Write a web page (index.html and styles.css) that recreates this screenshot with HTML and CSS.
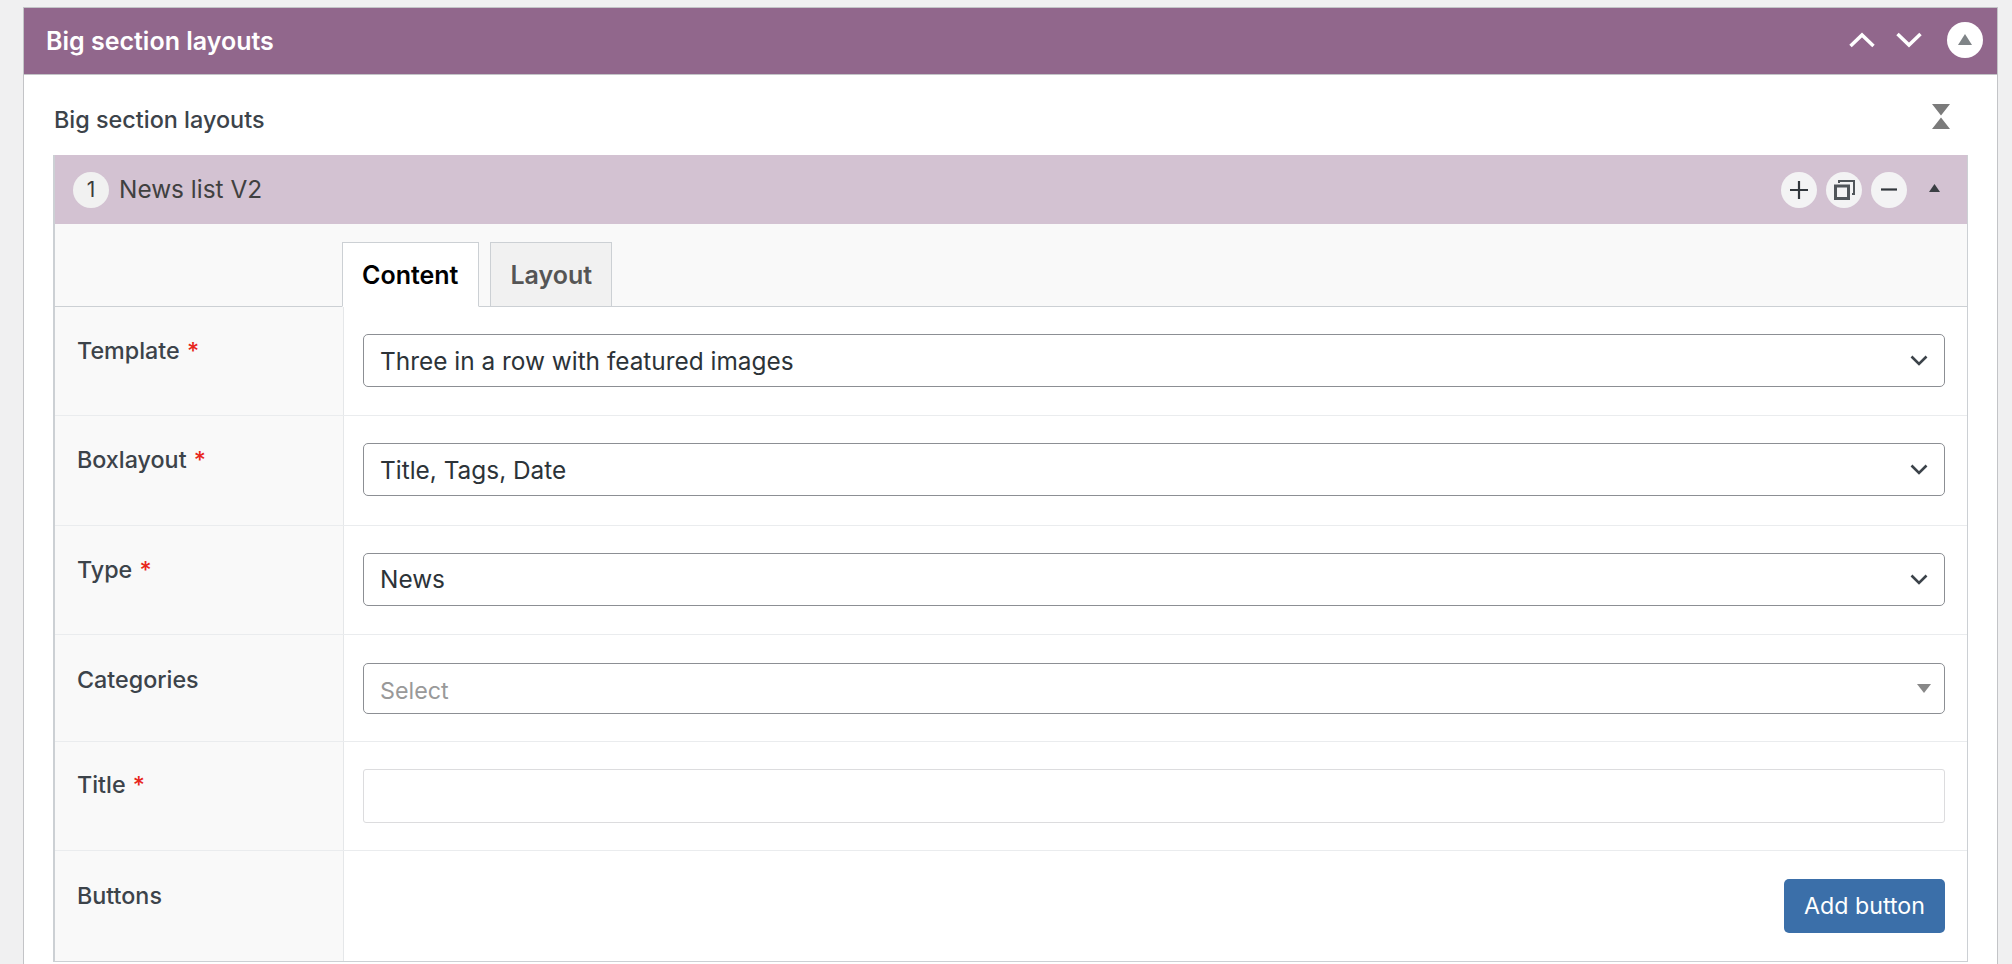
FILE: index.html
```html
<!DOCTYPE html>
<html lang="en">
<head>
<meta charset="utf-8">
<title>Big section layouts</title>
<link rel="stylesheet" href="styles.css">
</head>
<body>
<section class="postbox">
  <header class="postbox-head">
    <h2 class="postbox-title">Big section layouts</h2>
    <div class="postbox-actions">
      <svg class="chev" width="26" height="16" viewBox="0 0 26 16"><path d="M1.5 14 13 3l11.5 11" /></svg>
      <svg class="chev" width="26" height="16" viewBox="0 0 26 16"><path d="M1.5 2 13 13 24.500 2" /></svg>
      <span class="toggle-circle"><svg width="14" height="11" viewBox="0 0 14 11"><path d="M7 0 14 11H0z" fill="#7f8487"/></svg></span>
    </div>
  </header>
  <div class="postbox-body">
    <div class="group-title-row">
      <span class="group-title">Big section layouts</span>
      <svg class="hourglass" width="18" height="25" viewBox="0 0 18 25"><path d="M0 0h18L9 11.500zM9 13.500 18 25H0z" fill="#7b7b7b"/></svg>
    </div>
    <div class="layout">
      <div class="layout-head">
        <span class="order">1</span>
        <span class="layout-name">News list V2</span>
        <div class="layout-actions">
          <span class="round"><svg width="18" height="18" viewBox="0 0 18 18"><path d="M9 0v18M0 9h18" stroke="#32373c" stroke-width="2.200" fill="none"/></svg></span>
          <span class="round"><svg width="21" height="20" viewBox="0 0 21 20"><path d="M5 3V1h15v13h-2" stroke="#50555a" stroke-width="2" fill="none"/><rect x="1.500" y="6" width="13" height="12.500" stroke="#50555a" stroke-width="3" fill="none"/></svg></span>
          <span class="round"><svg width="16" height="3" viewBox="0 0 16 3"><path d="M0 1.500h16" stroke="#32373c" stroke-width="2.200"/></svg></span>
          <svg class="caret" width="11" height="8" viewBox="0 0 11 8"><path d="M5.500 0 11 8H0z" fill="#3a3f44"/></svg>
        </div>
      </div>
      <div class="tabs-row">
        <div class="tab tab-active">Content</div>
        <div class="tab">Layout</div>
      </div>
      <div class="row row-a">
        <div class="label">Template <span class="req">*</span></div>
        <div class="field"><div class="select"><span>Three in a row with featured images</span><svg width="18" height="11" viewBox="0 0 18 11"><path d="M1.500 1.500 9 9l7.500-7.500"/></svg></div></div>
      </div>
      <div class="row row-a">
        <div class="label">Boxlayout <span class="req">*</span></div>
        <div class="field"><div class="select"><span>Title, Tags, Date</span><svg width="18" height="11" viewBox="0 0 18 11"><path d="M1.500 1.500 9 9l7.500-7.500"/></svg></div></div>
      </div>
      <div class="row row-a">
        <div class="label">Type <span class="req">*</span></div>
        <div class="field"><div class="select"><span>News</span><svg width="18" height="11" viewBox="0 0 18 11"><path d="M1.500 1.500 9 9l7.500-7.500"/></svg></div></div>
      </div>
      <div class="row row-b">
        <div class="label">Categories</div>
        <div class="field"><div class="select select-multi"><span>Select</span><svg class="tri" width="14" height="9" viewBox="0 0 14 9"><path d="M0 0h14L7 9z" fill="#888"/></svg></div></div>
      </div>
      <div class="row row-c">
        <div class="label">Title <span class="req">*</span></div>
        <div class="field"><div class="text-input"></div></div>
      </div>
      <div class="row row-last">
        <div class="label">Buttons</div>
        <div class="field field-end"><div class="button">Add button</div></div>
      </div>
    </div>
  </div>
</section>
</body>
</html>
```
FILE: styles.css
```css
* { box-sizing: border-box; }
html, body { margin: 0; height: 964px; overflow: hidden; }
body {
  background: #f0f0f1;
  padding: 7px 14px 0 23px;
  font-family: Inter, "Liberation Sans", sans-serif;
  color: #3c434a;
}
.postbox {
  background: #fff;
  border: 1px solid #c3c4c7;
  border-bottom: 0;
  height: 957px;
}
.postbox-head {
  height: 67px;
  background: #91678c;
  border-bottom: 1px solid #c3c4c7;
  display: flex;
  align-items: center;
  justify-content: space-between;
  padding: 0 14px 2px 22px;
}
.postbox-title {
  margin: 2px 0 0;
  font-size: 25px;
  font-weight: 600;
  color: #fff;
}
.postbox-actions { display: flex; align-items: center; }
.chev { fill: none; stroke: #fff; stroke-width: 3.500; margin-right: 21px; }
.chev:nth-child(2) { margin-right: 25px; }
.toggle-circle {
  width: 36px; height: 36px; border-radius: 50%; background: #fff;
  display: flex; align-items: center; justify-content: center;
}
.toggle-circle svg { margin-top: -2px; }
.postbox-body { padding: 0 29px 0 29px; }
.group-title-row {
  height: 80px;
  display: flex;
  align-items: center;
  justify-content: space-between;
  padding: 0 18px 0 1px;
}
.group-title { font-size: 23.400px; font-weight: 500; color: #3c434a; margin-top: 9px; }
.hourglass { margin-top: 2px; }
.layout {
  border: 1px solid #ccd0d4;
  border-top: 0;
  border-left-width: 2px;
  background: #fff;
}
.layout-head {
  height: 69px;
  background: #d3c2d2;
  display: flex;
  align-items: center;
  padding: 0 27px 0 18px;
}
.order {
  width: 36px; height: 36px; border-radius: 50%;
  background: #f1f1f1; color: #3c3c3c;
  font-size: 21px;
  display: flex; align-items: center; justify-content: center;
}
.layout-name { font-size: 24.400px; margin: -1px 0 0 10px; color: #404040; }
.layout-actions { margin-left: auto; display: flex; align-items: center; gap: 9px; }
.round {
  width: 36px; height: 36px; border-radius: 50%; background: #f3f3f4;
  display: flex; align-items: center; justify-content: center;
}
.caret { margin-left: 13px; margin-top: -3px; }
.tabs-row {
  height: 83px;
  background: #f9f9f9;
  border-bottom: 1px solid #ccd0d4;
  display: flex;
  align-items: flex-end;
  gap: 11px;
  padding-left: 287px;
}
.tab {
  height: 65px;
  margin-bottom: -1px;
  padding: 0 19px;
  border: 1px solid #ccd0d4;
  background: #f1f1f1;
  font-size: 25px;
  font-weight: 600;
  color: #555;
  display: flex;
  align-items: center;
  border-bottom-color: #ccd0d4;
}
.tab-active {
  background: #fff;
  color: #000;
  border-bottom-color: #fff;
  padding: 0 20px 0 19px;
}
.row {
  display: grid;
  grid-template-columns: 289px 1fr;
  border-bottom: 1px solid #eaecee;
}
.row-a { height: 109.330px; }
.row-b { height: 107px; }
.row-c { height: 109px; }
.row-last { height: 110px; border-bottom: 0; }
.label {
  background: #f9f9f9;
  border-right: 1px solid #e5e7e9;
  padding: 31px 0 0 22px;
  font-size: 23.300px;
  font-weight: 500;
  line-height: 26px;
  color: #3c434a;
}
.row-b .label, .row-last .label { padding-top: 32px; }
.row-c .label { padding-top: 30px; }
.req { color: #e8261c; margin-left: 1px; }
.field { padding: 27px 22px 0 19px; }
.select {
  height: 53px;
  border: 1px solid #8c8f94;
  border-radius: 5px;
  background: #fff;
  display: flex;
  align-items: center;
  justify-content: space-between;
  padding: 0 16px 0 16px;
  font-size: 24.400px;
  color: #2c3338;
}
.select svg { fill: none; stroke: #3c434a; stroke-width: 2.600; }
.select-multi { height: 51px; margin-top: 1px; color: #999; padding-right: 13px; font-size: 23.300px; }
.select-multi span { margin-top: 4px; }
.select .tri { stroke: none; fill: #888; }
.text-input { height: 54px; border: 1px solid #dcdcde; border-radius: 3px; background: #fff; }
.field-end { display: flex; justify-content: flex-end; align-items: flex-start; padding-top: 28px; }
.button {
  width: 161px; height: 54px;
  background: #3b6fa9;
  border-radius: 5px;
  color: #fff;
  font-size: 23.200px;
  display: flex; align-items: center; justify-content: center;
}
```
